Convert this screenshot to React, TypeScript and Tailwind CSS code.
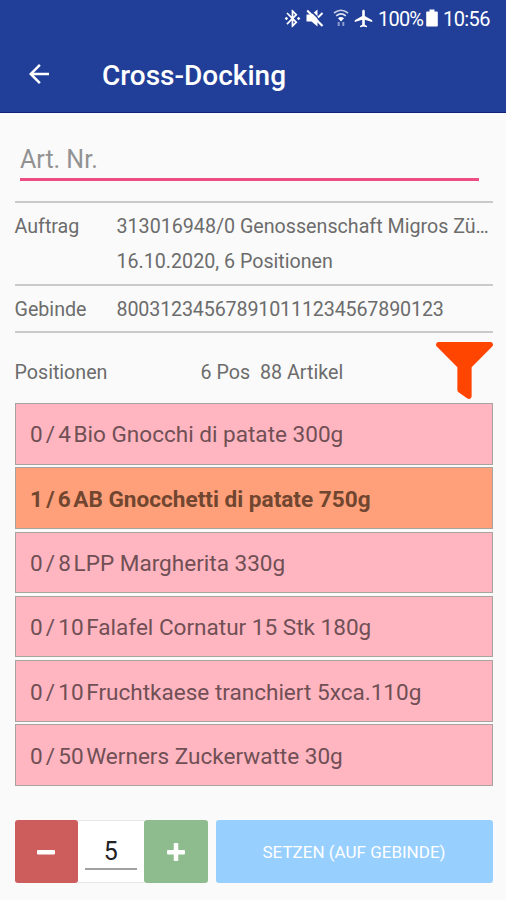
import React from "react";
import { FaFilter } from "react-icons/fa";
import {
  MdAirplanemodeActive,
  MdArrowBack,
  MdBluetoothConnected,
} from "react-icons/md";

type Position = {
  done: number;
  total: number;
  name: string;
  active?: boolean;
};

const positions: Position[] = [
  { done: 0, total: 4, name: "Bio Gnocchi di patate 300g" },
  { done: 1, total: 6, name: "AB Gnocchetti di patate 750g", active: true },
  { done: 0, total: 8, name: "LPP Margherita 330g" },
  { done: 0, total: 10, name: "Falafel Cornatur 15 Stk 180g" },
  { done: 0, total: 10, name: "Fruchtkaese tranchiert 5xca.110g" },
  { done: 0, total: 50, name: "Werners Zuckerwatte 30g" },
];

//Solid speaker with a slash through it
function MutedIcon() {
  return (
    <svg viewBox="0 0 18 18" className="h-[18px] w-[18px]">
      <path d="M0.500 5.500h5l6-5v17l-6-5H0.500z" fill="#fff" />
      <path d="M3 0L18.500 15.500" stroke="#213f99" strokeWidth="1.600" />
      <path d="M1.200 1.500L16.500 17" stroke="#fff" strokeWidth="2.200" />
      <path d="M12 8.500L16.500 4" stroke="#fff" strokeWidth="2" />
    </svg>
  );
}

//Wifi symbol with the two traffic arrows below
function WifiIcon() {
  return (
    <svg viewBox="0 0 16 18" className="h-[18px] w-4" fill="none" stroke="#fff">
      <path d="M1 4Q8 -1.500 15 4" strokeWidth="1.600" opacity=".75" />
      <path d="M3.200 6.800Q8 3 12.800 6.800" strokeWidth="1.600" opacity=".85" />
      <path d="M5 9.200Q8 6.800 11 9.200L8 12.500Z" fill="#fff" stroke="none" />
      <path d="M5.700 17v-4M10.300 13v4" strokeWidth="2" opacity=".5" />
    </svg>
  );
}

function BatteryIcon() {
  return (
    <svg viewBox="0 0 12 18" className="h-[18px] w-3" fill="#fff">
      <path d="M3.500 0.500h5v2h2.500q.8 0 .8.800v13.400q0 .8-.8.800H1q-.8 0-.8-.8V3.300q0-.8.800-.8h2.500z" />
    </svg>
  );
}

function StatusBar() {
  return (
    <div className="flex h-9 items-center pl-[282px] text-white">
      <MdBluetoothConnected className="size-[21px] shrink-0" />
      <div className="ml-[3px] shrink-0">
        <MutedIcon />
      </div>
      <div className="ml-[9px] shrink-0">
        <WifiIcon />
      </div>
      <MdAirplanemodeActive className="ml-[4px] size-[21px] shrink-0" />
      <span className="ml-[4px] w-[48px] shrink-0 pt-px text-[20px] tracking-[-0.800px] whitespace-nowrap">
        100%
      </span>
      <BatteryIcon />
      <span className="ml-[5px] shrink-0 pt-px text-[20px] tracking-[-0.600px] whitespace-nowrap">
        10:56
      </span>
    </div>
  );
}

function Header() {
  return (
    <header className="h-[113px] border-b border-[#10237c] bg-[#213f99]">
      <StatusBar />
      <div className="flex h-[76px] items-center pl-[24px] text-white">
        <MdArrowBack className="size-[30px]" />
        <h1 className="ml-[48px] pt-[3px] text-[28px] font-medium">Cross-Docking</h1>
      </div>
    </header>
  );
}

function PositionRow({ done, total, name, active }: Position) {
  return (
    <li
      className={
        active
          ? "flex h-[61.500px] items-center border border-[#a9a3a0] bg-[#ffa07a] pt-[3px] pl-[14.500px] text-[22.600px] font-bold text-[#704630]"
          : "flex h-[61.500px] items-center border border-[#a9a3a0] bg-[#ffb6c1] pt-[3px] pl-[14.500px] text-[22.550px] text-[#704f55]"
      }
    >
      <span>{done}</span>
      <span className="mx-[3.200px]">/</span>
      <span>{total}</span>
      <span className="ml-[2.500px] whitespace-nowrap">{name}</span>
    </li>
  );
}

export default function App() {
  return (
    <div className="h-[900px] w-[506px] overflow-hidden bg-[#fafafa] font-[Roboto,sans-serif] text-[19.660px] text-[#6c6c6c]">
      <Header />
      <main className="pr-[13.500px] pl-[14.500px]">
        <div className="mr-[13.500px] ml-[5.500px] flex h-[68px] items-end border-b-[3px] border-[#ee4d83]">
          <span className="text-[25px] text-[#929292]">Art. Nr.</span>
        </div>

        <section className="mt-[20px] h-[83px] border-t-2 border-[#c9c9c9] pt-[6px]">
          <div className="flex h-[35px] items-center">
            <span className="w-[102px] shrink-0">Auftrag</span>
            <span className="whitespace-nowrap">313016948/0 Genossenschaft Migros Zü…</span>
          </div>
          <div className="flex h-[35px] items-center pl-[102px]">16.10.2020, 6 Positionen</div>
        </section>
        <section className="flex h-[49px] items-center border-y-2 border-[#c9c9c9] pt-[2px]">
          <span className="w-[102px] shrink-0">Gebinde</span>
          <span className="tracking-[-0.140px]">800312345678910111234567890123</span>
        </section>

        <div className="flex h-[70px] items-center pt-[9px]">
          <span className="w-[186px]">Positionen</span>
          <span>6 Pos</span>
          <span className="ml-[10px]">88 Artikel</span>
          <FaFilter className="mt-[-4px] mr-[-0.500px] ml-auto size-[57px] text-[#ff4500]" />
        </div>

        <ul className="flex flex-col gap-[2.800px]">
          {positions.map((position) => (
            <PositionRow key={position.name} {...position} />
          ))}
        </ul>

        <div className="mt-[34.500px] flex h-[63px]">
          <button className="flex w-[63.500px] items-center justify-center rounded-[3px] bg-[#cd5c5c]">
            <svg viewBox="0 0 20 20" className="size-5" fill="#fff">
              <rect x="1" y="8" width="18" height="4.500" rx="1" />
            </svg>
          </button>
          <div className="flex w-[65.500px] flex-col items-center border-y border-[#e7e7e7] bg-white">
            <span className="mt-[14px] h-[35px] w-[52px] border-b-2 border-[#a0a0a0] text-center text-[25px] leading-[34px] text-[#222]">
              5
            </span>
          </div>
          <button className="flex w-[64px] items-center justify-center rounded-[3px] bg-[#8fbc8f]">
            <svg viewBox="0 0 20 20" className="size-5" fill="#fff">
              <rect x="1" y="8" width="18" height="4.500" rx="1" />
              <rect x="7.750" y="1" width="4.500" height="18" rx="1" />
            </svg>
          </button>
          <button className="ml-[8px] flex-1 rounded-[3px] bg-[#97cfff] pt-[2px] text-[17px] text-white">
            SETZEN (AUF GEBINDE)
          </button>
        </div>
      </main>
    </div>
  );
}
